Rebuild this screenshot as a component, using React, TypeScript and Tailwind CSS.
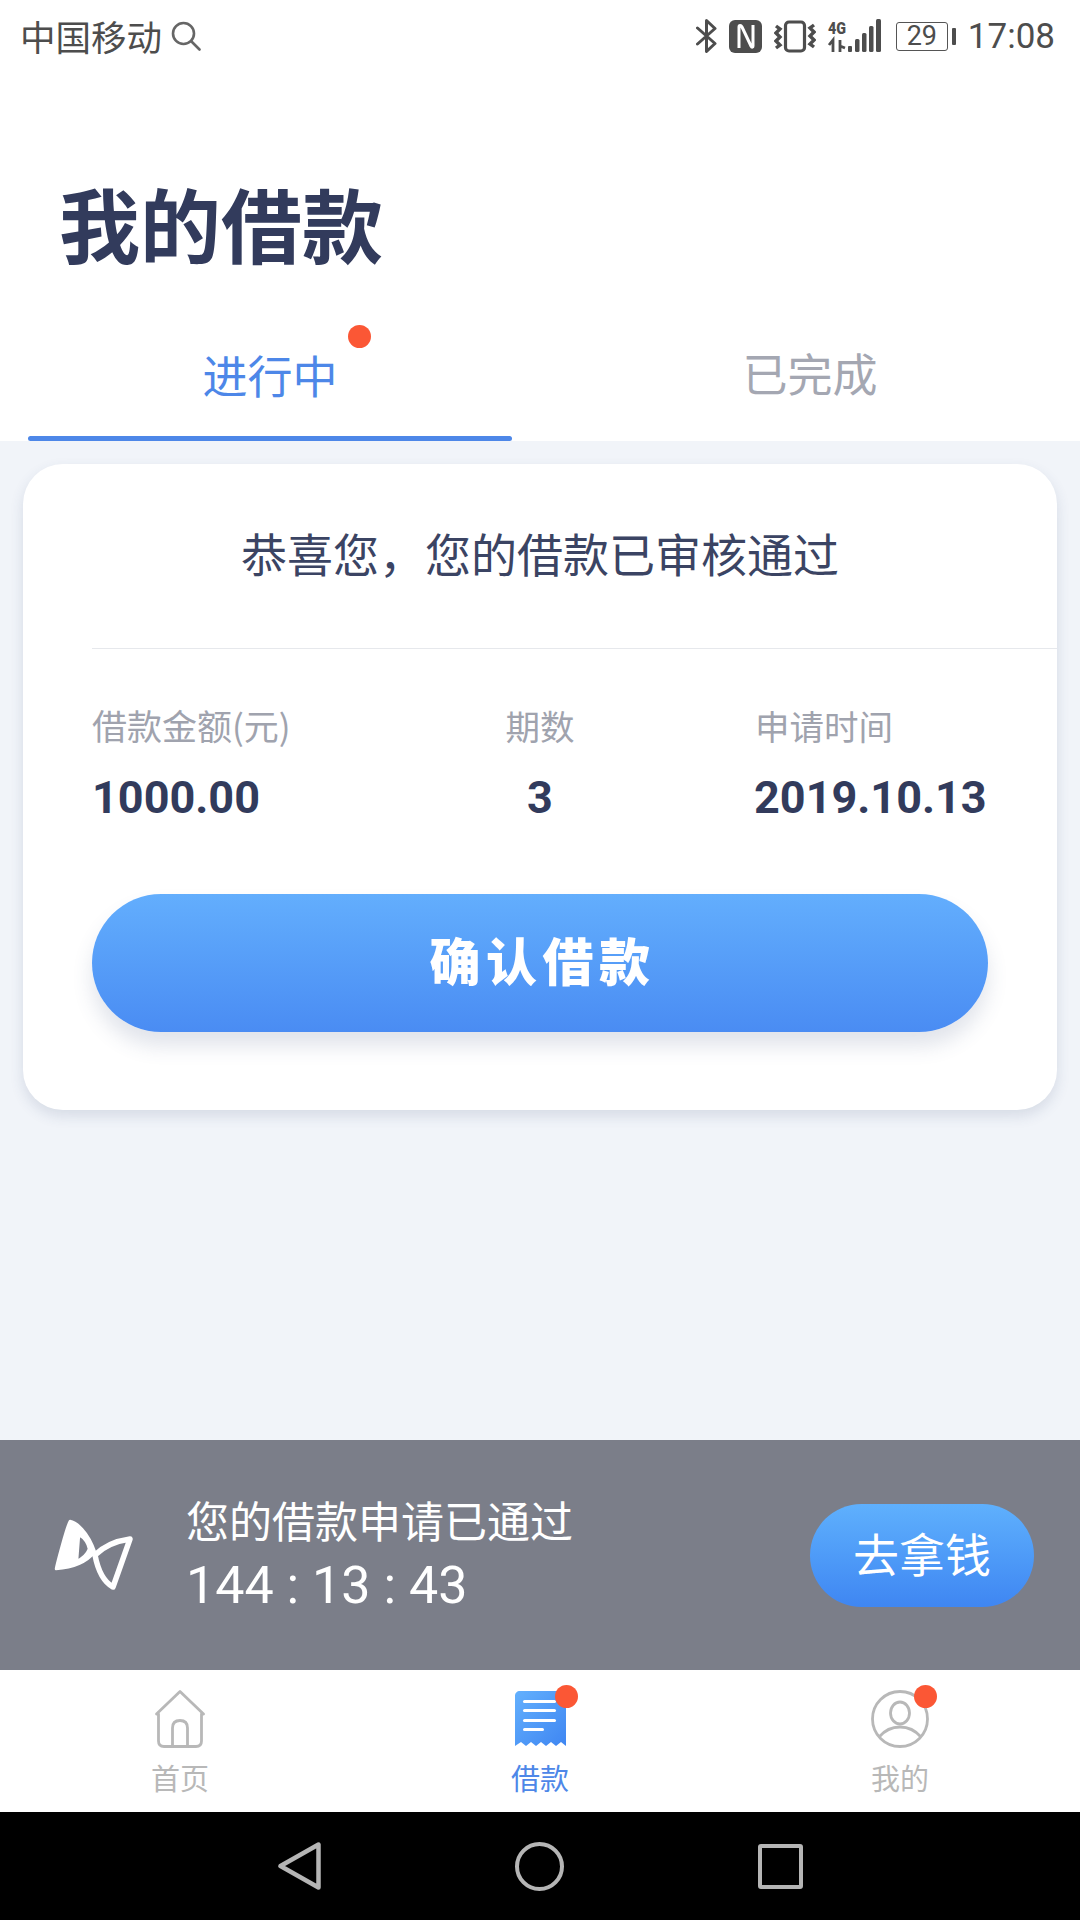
const cjk = "font-['Noto_Sans_CJK_SC',sans-serif]";
const roboto = "font-['Roboto','Noto_Sans_CJK_SC',sans-serif]";

function StatusIcons() {
  return (
    <div className="flex items-center">
      {/* bluetooth */}
      <svg width="21" height="34" viewBox="0 0 21 34" fill="none" stroke="#4d4d4d" strokeWidth="3" strokeLinecap="round" strokeLinejoin="round">
        <path d="M1.5 9 L19 24.5 L10.5 32.5 V1.5 L19 9.5 L1.5 25" />
      </svg>
      {/* nfc */}
      <svg className="ml-[12px]" width="33" height="33" viewBox="0 0 33 33" fill="none">
        <rect width="33" height="33" rx="6" fill="#4d4d4d" />
        <path d="M10 28 V7 C10 5 12 5 13 7 L22 26 C23 28 24 27 24 26 V5" stroke="#fff" strokeWidth="3" strokeLinejoin="round" />
      </svg>
      {/* vibrate */}
      <svg className="ml-[12px]" width="42" height="33" viewBox="0 0 42 33" fill="none" stroke="#4d4d4d">
        <rect x="11.5" y="2" width="19" height="29" rx="3.5" strokeWidth="3.2" />
        <path d="M2 6 L6 9 L2 13 L6 17 L2 21 L6 25 L2 28" strokeWidth="3.4" />
        <path d="M40 5 L36 8 L40 12 L36 16 L40 20 L36 24 L40 27" strokeWidth="3.4" />
      </svg>
      {/* 4g + signal */}
      <svg className="ml-[12px] overflow-visible" width="53" height="34" viewBox="0 0 53 34">
        <text x="0" y="15" fontFamily="Roboto" fontWeight="900" fontSize="16" fill="#4d4d4d" textLength="18" lengthAdjust="spacingAndGlyphs">4G</text>
        <path d="M5 33 V21 L1 26 M12 33 V21 M12 27 L17 29" stroke="#4d4d4d" strokeWidth="2.8" fill="none" />
        <g fill="#4d4d4d">
          <rect x="20" y="27" width="4" height="6" rx="1" />
          <rect x="27" y="20" width="4.5" height="13" rx="1.5" />
          <rect x="34" y="14" width="4.5" height="19" rx="1.5" />
          <rect x="41" y="7" width="4.5" height="26" rx="1.5" />
          <rect x="48" y="0" width="5" height="33" rx="1.5" />
        </g>
      </svg>
      {/* battery */}
      <div className={`ml-[15px] flex h-[29px] w-[52px] items-center justify-center rounded-[3px] border-[1.5px] border-[#555] text-[27px] leading-none text-[#4d4d4d] ${roboto}`}>
        29
      </div>
      <div className="ml-[4px] h-[17px] w-[4px] rounded-[1px] bg-[#4d4d4d]" />
      <span className={`ml-[12px] text-[35px] leading-none text-[#4d4d4d] ${roboto}`}>17:08</span>
    </div>
  );
}

function HourglassIcon() {
  return (
    <svg width="80" height="72" viewBox="0 0 80 72">
      <path
        fillRule="evenodd"
        d="M16 2 C22 3 34 12 41 33 C32 44 18 49 2 50 C2 48 13 6 16 2 Z M25 16 L23 42 C29 39 33 35 35 30 C34 25 30 19 25 16 Z"
        fill="#fff"
        stroke="#fff"
        strokeWidth="2.5"
        strokeLinejoin="round"
      />
      <path d="M76 20 L59 68 C50 63 44 52 41 36 C50 27 62 22 76 20 Z" fill="none" stroke="#fff" strokeWidth="5.5" strokeLinejoin="round" />
    </svg>
  );
}

function HomeIcon() {
  return (
    <svg width="50" height="58" viewBox="0 0 50 58" fill="none" stroke="#b8b8b8" strokeWidth="2.8" strokeLinecap="round" strokeLinejoin="round">
      <path d="M1.5 24 L25 1.5 L48.5 24 H46.5 V51 C46.5 54.5 44.5 56.5 41 56.5 H9 C5.5 56.5 3.5 54.5 3.5 51 V24 Z" />
      <path d="M17.5 56 V38 C17.5 33 20.5 30.5 25 30.5 C29.5 30.5 32.5 33 32.5 38 V56" />
    </svg>
  );
}

function ReceiptIcon() {
  return (
    <svg width="51" height="56" viewBox="0 0 51 56">
      <defs>
        <linearGradient id="receipt" x1="0" y1="0" x2="1" y2="1">
          <stop offset="0" stopColor="#63b0fd" />
          <stop offset="1" stopColor="#3f86f2" />
        </linearGradient>
      </defs>
      <path d="M5 0 H51 V55 L46 51 L41 55 L36 51 L31 55 L26 51 L21 55 L16 51 L11 55 L6 51 L0 55 V5 C0 2 2 0 5 0 Z" fill="url(#receipt)" />
      <g fill="#fff">
        <rect x="8" y="9" width="33" height="3" rx="1.5" />
        <rect x="8" y="18" width="33" height="3" rx="1.5" />
        <rect x="8" y="28" width="33" height="3" rx="1.5" />
        <rect x="8" y="37" width="21" height="3" rx="1.5" />
      </g>
    </svg>
  );
}

function ProfileIcon() {
  return (
    <svg width="58" height="58" viewBox="0 0 58 58" fill="none" stroke="#b8b8b8" strokeWidth="2.8">
      <circle cx="29" cy="29" r="27.5" />
      <ellipse cx="29" cy="23" rx="9.5" ry="11" />
      <path d="M8 47 C14 40 21 37 29 37 C37 37 44 40 50 47" />
    </svg>
  );
}

function Dot({ className }: { className: string }) {
  return <span className={`absolute h-[23px] w-[23px] rounded-full bg-[#fb5735] ${className}`} />;
}

function NavItem({ label, active, badge, children }: { label: string; active?: boolean; badge?: string; children: React.ReactNode }) {
  return (
    <div className="flex flex-col items-center pt-[20px]">
      <div className="relative flex h-[58px] items-center">
        {children}
        {badge && <Dot className={badge} />}
      </div>
      <span className={`mt-[14px] text-[29px] leading-[30px] ${active ? 'text-[#4d87e8]' : 'text-[#b8b8b8]'}`}>{label}</span>
    </div>
  );
}

export default function App() {
  return (
    <div className={`flex h-[1920px] w-[1080px] flex-col overflow-hidden bg-white ${cjk}`}>
      {/* status bar */}
      <div className="flex h-[75px] items-center justify-between pb-[3px] pl-[20px] pr-[25px]">
        <div className="flex items-center">
          <span className="text-[35.5px] leading-none text-[#4d4d4d]">中国移动</span>
          <svg className="ml-[9px]" width="30" height="30" viewBox="0 0 30 30" fill="none" stroke="#666" strokeWidth="2.6" strokeLinecap="round">
            <circle cx="12.5" cy="12.5" r="10.5" />
            <path d="M20.5 20.5 L28.5 28.5" />
          </svg>
        </div>
        <StatusIcons />
      </div>

      <h1 className="mb-[39px] ml-[59px] mt-[97px] text-[81px] font-bold leading-[100px] text-[#323b5c]">我的借款</h1>

      {/* tabs */}
      <div className="grid h-[130px] grid-cols-2">
        <div className="flex flex-col">
          <div className="flex flex-1 items-center justify-center pb-[3px] pt-[5px]">
            <span className="relative text-[45px] leading-none text-[#4d87e8]">
              进行中
              <Dot className="right-[-33px] top-[-27px]" />
            </span>
          </div>
          <div className="mx-[28px] h-[5px] rounded-full bg-[#4d87e8]" />
        </div>
        <div className="flex items-center justify-center pb-[7px]">
          <span className="text-[45px] leading-none text-[#a4a7b2]">已完成</span>
        </div>
      </div>

      {/* content */}
      <div className="flex-1 bg-[#f1f4f9] px-[23px] pt-[23px]">
        <div className="rounded-[40px] bg-white pb-[78px] shadow-[0_6px_14px_rgba(50,70,110,0.14)]">
          <div className="flex h-[184px] items-center justify-center pb-[8px] text-[46px] leading-none text-[#3b4463]">
            恭喜您，您的借款已审核通过
          </div>
          <div className="ml-[69px] border-t border-[#e6e8ec]" />
          <div className="flex pl-[69px] pt-[51px]">
            <div className="w-[363px]">
              <div className="text-[35px] leading-[50px] text-[#a0a3ae]">借款金额(元)</div>
              <div className={`mt-[18px] text-[45px] font-bold leading-[60px] text-[#323b5c] ${roboto}`}>1000.00</div>
            </div>
            <div className="w-[170px] text-center">
              <div className="text-[34.5px] leading-[50px] text-[#a0a3ae]">期数</div>
              <div className={`mt-[18px] text-[45px] font-bold leading-[60px] text-[#323b5c] ${roboto}`}>3</div>
            </div>
            <div className="ml-[129px]">
              <div className="pl-[1px] text-[34.5px] leading-[50px] text-[#a0a3ae]">申请时间</div>
              <div className={`mt-[18px] text-[45px] font-bold leading-[60px] text-[#323b5c] ${roboto}`}>2019.10.13</div>
            </div>
          </div>
          <button className="ml-[69px] mt-[66px] flex h-[138px] w-[896px] items-center justify-center rounded-full bg-gradient-to-b from-[#63aefd] to-[#4a8cf3] pb-[8px] pl-[5px] text-[51px] font-black tracking-[5.5px] text-white shadow-[0_14px_20px_rgba(70,90,130,0.16)]">
            确认借款
          </button>
        </div>
      </div>

      {/* approved banner */}
      <div className="flex h-[230px] items-center bg-[#7b7e89] pl-[54px] pr-[46px]">
        <HourglassIcon />
        <div className="ml-[52px] text-white">
          <div className="mb-[6px] text-[43px] leading-[50px]">您的借款申请已通过</div>
          <div className={`mt-[12px] text-[52px] leading-[60px] ${roboto}`}>144 : 13 : 43</div>
        </div>
        <button className="ml-auto flex h-[103px] w-[224px] items-center justify-center rounded-full bg-gradient-to-b from-[#5fb0fd] to-[#3f86f2] pb-[6px] text-[46px] leading-none text-white">
          去拿钱
        </button>
      </div>

      {/* tab bar */}
      <div className="grid h-[142px] grid-cols-3 bg-white">
        <NavItem label="首页"><HomeIcon /></NavItem>
        <NavItem label="借款" active badge="right-[-12px] top-[-5px]"><ReceiptIcon /></NavItem>
        <NavItem label="我的" badge="right-[-8px] top-[-5px]"><ProfileIcon /></NavItem>
      </div>

      {/* android nav */}
      <div className="flex h-[108px] items-center justify-center gap-[194px] bg-black">
        <svg width="43" height="48" viewBox="0 0 43 48" fill="none" stroke="#b5b5b5" strokeWidth="4.5" strokeLinejoin="round">
          <path d="M40.5 2.5 V45.5 L2.5 24 Z" />
        </svg>
        <div className="h-[49px] w-[49px] rounded-full border-[4.5px] border-[#b5b5b5]" />
        <div className="h-[45px] w-[45px] rounded-[3px] border-[4.5px] border-[#b5b5b5]" />
      </div>
    </div>
  );
}
